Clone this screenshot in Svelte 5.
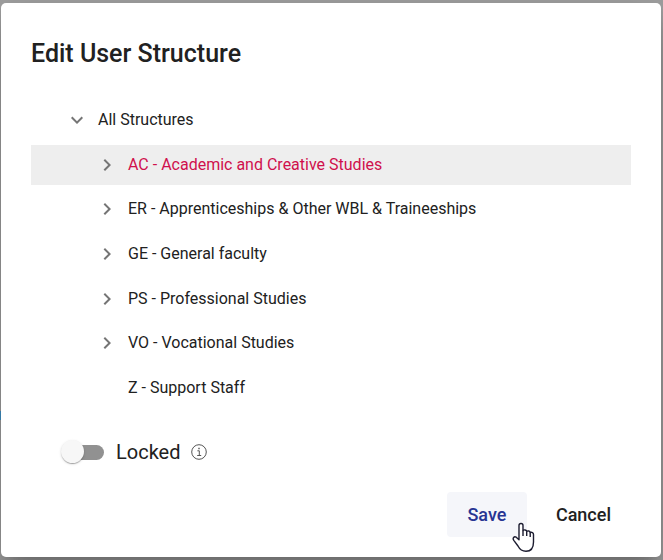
<script>
  const structures = [
    { id: 'AC', label: 'AC - Academic and Creative Studies', children: true },
    { id: 'ER', label: 'ER - Apprenticeships & Other WBL & Traineeships', children: true },
    { id: 'GE', label: 'GE - General faculty', children: true },
    { id: 'PS', label: 'PS - Professional Studies', children: true },
    { id: 'VO', label: 'VO - Vocational Studies', children: true },
    { id: 'Z', label: 'Z - Support Staff', children: false }
  ];
  let selected = $state('AC');
  let locked = $state(false);
</script>

<div class="backdrop">
  <span class="page-mark" aria-hidden="true"></span>
  <div class="dialog" role="dialog" aria-labelledby="title">
    <h1 id="title">Edit User Structure</h1>

    <div class="tree">
      <div class="row root">
        <button class="toggle" aria-label="Collapse All Structures">
          <svg width="24" height="24" viewBox="0 0 24 24"><path d="M7.41 8.59 12 13.17l4.59-4.58L18 10l-6 6-6-6z" /></svg>
        </button>
        <button class="name">All Structures</button>
      </div>
      {#each structures as item}
        <div class="row" class:selected={selected === item.id}>
          {#if item.children}
            <button class="toggle" aria-label={'Expand ' + item.label}>
              <svg width="24" height="24" viewBox="0 0 24 24"><path d="M10 6 8.59 7.41 13.17 12l-4.58 4.59L10 18l6-6z" /></svg>
            </button>
          {:else}
            <span class="toggle"></span>
          {/if}
          <button class="name" onclick={() => (selected = item.id)}>{item.label}</button>
        </div>
      {/each}
    </div>

    <div class="lock">
      <label>
        <input type="checkbox" role="switch" bind:checked={locked} />
        <span>Locked</span>
      </label>
      <svg class="info" width="16" height="16" viewBox="0 0 16 16" aria-hidden="true">
        <circle cx="8" cy="8" r="7.3" />
        <path d="M6.4 6.8h1.9v4.7M6.2 11.5h4" />
        <path class="dot" d="M7.3 3.8h1.4v1.4H7.3z" />
      </svg>
    </div>

    <div class="actions">
      <button class="action save">Save
        <svg class="pointer" width="24" height="32" viewBox="0 0 24 32" aria-hidden="true">
          <path d="M7 16V4.5C7 1.8 11 1.8 11 4.5V9.5C12 8.5 14.2 8.8 14.7 10.3C16 9.5 17.8 10 18.2 11.5C19.7 10.8 21.5 11.8 21.5 13.5V21C21.5 27 18.5 30.3 14 30.3C9.3 30.3 7.6 28.2 6 25L1.8 19.3C.2 17 2.2 15 4.2 16.2L7 18.7Z" />
          <path d="M11 9.5V15M14.7 10.3V15M18.2 11.5V16" />
        </svg>
      </button>
      <button class="action">Cancel</button>
    </div>
  </div>
</div>

<style>
  :global(body) {
    margin: 0;
    background: #a3a3a3;
  }

  .backdrop {
    position: relative;
    box-sizing: border-box;
    min-height: 100vh;
    overflow: hidden;
    padding: 3px 2px 3px 1px;
    font-family: Roboto, "Liberation Sans", sans-serif;
    color: #212121;
  }

  .page-mark {
    position: absolute;
    left: 0;
    top: 411px;
    width: 1px;
    height: 9px;
    background: #3479a5;
  }

  .dialog {
    box-sizing: border-box;
    padding: 30px 30px 20px;
    border-radius: 5px;
    background: #fff;
    box-shadow:
      0 11px 15px -7px rgba(0, 0, 0, 0.2),
      0 24px 38px 3px rgba(0, 0, 0, 0.14),
      0 9px 46px 8px rgba(0, 0, 0, 0.12);
  }

  h1 {
    margin: 0 0 25px;
    font-size: 25px;
    line-height: 42px;
    font-weight: 500;
  }

  button {
    border: 0;
    padding: 0;
    background: none;
    color: inherit;
    font: inherit;
    cursor: pointer;
  }

  .tree {
    display: flex;
    flex-direction: column;
    justify-content: space-between;
    min-height: 308px;
    font-size: 16px;
  }

  .row {
    display: flex;
    align-items: center;
    gap: 9px;
    height: 40px;
    padding-left: 64px;
  }

  .row.root {
    padding-left: 34px;
  }

  .selected {
    background: #eee;
  }

  .selected .name {
    color: #d0104c;
  }

  .toggle {
    width: 24px;
    height: 24px;
  }

  .toggle svg {
    display: block;
    fill: #757575;
  }

  .name {
    line-height: 24px;
    text-align: left;
  }

  .lock {
    display: flex;
    align-items: center;
    gap: 11px;
    margin: 32px 0 28px 31px;
    font-size: 20px;
    line-height: 24px;
  }

  label {
    display: flex;
    align-items: center;
    gap: 12px;
  }

  input {
    appearance: none;
    position: relative;
    width: 42px;
    height: 15px;
    margin: 0;
    border-radius: 8px;
    background: linear-gradient(#919191, #919191) 6px 0 no-repeat;
  }

  input::before {
    content: "";
    position: absolute;
    left: -1px;
    top: -5px;
    width: 23px;
    height: 23px;
    border-radius: 50%;
    background: #f7f7f7;
    box-shadow:
      0 2px 1px -1px rgba(0, 0, 0, 0.2),
      0 1px 1px 0 rgba(0, 0, 0, 0.14),
      0 1px 3px 0 rgba(0, 0, 0, 0.12);
  }

  input:checked::before {
    left: 21px;
    background: #283593;
  }

  .info {
    fill: none;
    stroke: #555;
    stroke-width: 1;
  }

  .info .dot {
    fill: #555;
    stroke: none;
  }

  .actions {
    display: flex;
    justify-content: flex-end;
    gap: 9px;
  }

  .action {
    min-width: 80px;
    padding: 0 20px;
    height: 45px;
    border-radius: 4px;
    font-size: 18px;
    font-weight: 500;
  }

  .save {
    position: relative;
    background: #f5f6fa;
    color: #283593;
  }

  .pointer {
    position: absolute;
    right: -9px;
    bottom: -16px;
    fill: #fff;
    stroke: #1c1c30;
    stroke-width: 1.4;
    stroke-linejoin: round;
  }
</style>
